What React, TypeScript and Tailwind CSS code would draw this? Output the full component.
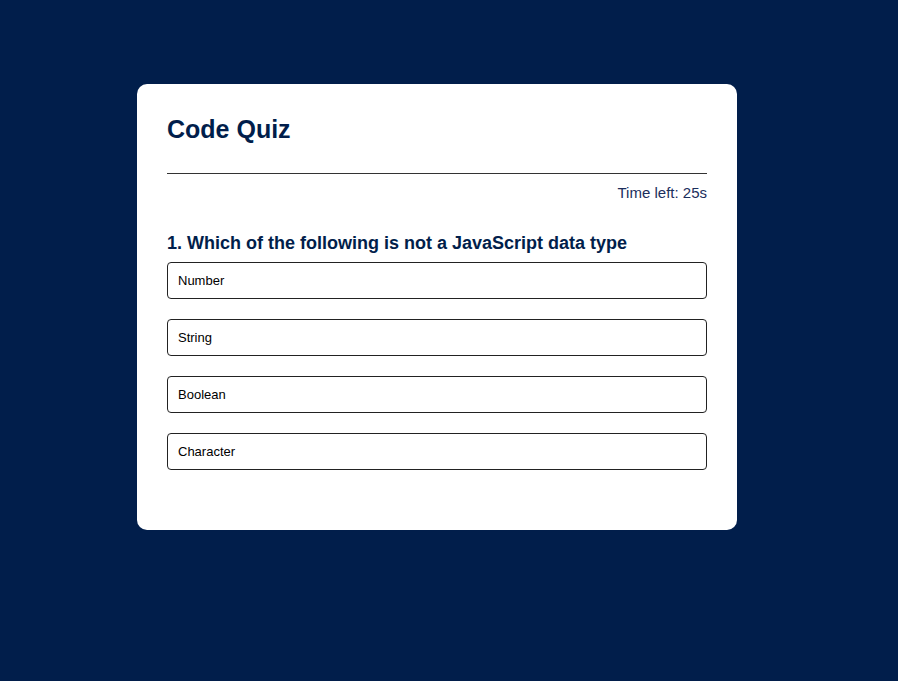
import React from 'react';

const options = ['Number', 'String', 'Boolean', 'Character'];

const App: React.FC = () => {
  return (
    <div
      className="min-h-[681px] w-full bg-[#011e4b] pt-[84px] pl-[137px]"
      style={{ fontFamily: '"Liberation Sans", Arial, sans-serif' }}
    >
      <div className="w-[600px] rounded-[10px] bg-white px-[30px] pt-[30px] pb-[40px]">
        <h1 className="text-[25px] leading-[30px] font-bold text-[#011e4b]">
          Code Quiz
        </h1>
        <hr className="mt-[29px] border-t border-[#333333]" />
        <p className="mt-[9px] text-right text-[15px] leading-[20px] font-light text-[#1b2e5c]">
          Time left: 25s
        </p>
        <h2 className="mt-[28px] text-[18px] leading-[24px] font-bold text-[#011e4b]">
          1. Which of the following is not a JavaScript data type
        </h2>
        <div className="mt-[7px] flex flex-col">
          {options.map((opt) => (
            <button
              key={opt}
              className="mb-[20px] flex h-[37px] w-full items-center rounded-[4px] border border-[#222222] bg-white px-[10px] text-left text-[13px] text-black"
            >
              {opt}
            </button>
          ))}
        </div>
      </div>
    </div>
  );
};

export default App;
